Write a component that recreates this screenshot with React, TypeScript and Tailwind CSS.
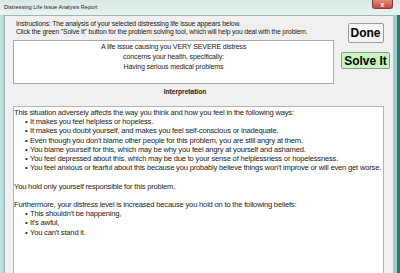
import React from "react";

const bullets1 = [
  "It makes you feel helpless or hopeless.",
  "It makes you doubt yourself, and makes you feel self-conscious or inadequate.",
  "Even though you don't blame other people for this problem, you are still angry at them.",
  "You blame yourself for this, which may be why you feel angry at yourself and ashamed.",
  "You feel depressed about this, which may be due to your sense of helplessness or hopelessness.",
  "You feel anxious or fearful about this because you probably believe things won't improve or will even get worse.",
];

const beliefs = ["This shouldn't be happening,", "It's awful,", "You can't stand it."];

const Bullet = ({ text }: { text: string }) => (
  <div className="flex pl-[11px]">
    <span className="w-[5px] shrink-0">•</span>
    <span>{text}</span>
  </div>
);

export default function App() {
  return (
    <div
      className="w-[400px] h-[273px] overflow-hidden flex flex-col bg-[#b9dcd6] text-[#1a1a1a]"
      style={{ fontFamily: '"Liberation Sans", Arial, sans-serif' }}
    >
      {/* title bar */}
      <div className="h-[15px] shrink-0 flex items-start justify-between bg-gradient-to-b from-[#d6e9e6] to-[#e9f3f1]">
        <span className="pl-[4px] pt-[3px] text-[5.6px] leading-[9px] text-[#222]">
          Distressing Life Issue Analysis Report
        </span>
        <div className="mr-[7px] w-[21px] h-[9px] rounded-b-[3px] bg-gradient-to-b from-[#e28a7d] to-[#c44a3a] border border-t-0 border-[#8c3b30] flex items-center justify-center text-white text-[7px] leading-[7px] font-bold">
          x
        </div>
      </div>

      <div className="flex flex-1 min-h-0">
        <div className="w-[4px] shrink-0 bg-gradient-to-r from-[#c6e6e0] to-[#a9d6ce]" />

        {/* client */}
        <div className="flex-1 min-h-0 bg-[#f0f0f0] border-l border-t border-[#9fb5b2] flex flex-col">
          <div className="flex">
            <div className="flex flex-col ml-[8px] w-[321px]">
              <div className="pt-[4px] pl-[3px] text-[6.8px] leading-[8px] tracking-[-0.15px] text-[#222]">
                <div>Instructions: The analysis of your selected distressing life issue appears below.</div>
                <div>
                  Click the green "Solve It" button for the problem solving tool, which will help you deal with the
                  problem.
                </div>
              </div>
              <div className="mt-[4px] h-[44px] bg-white border border-[#a8a8a8] flex flex-col items-center pt-[1px] text-[7.1px] leading-[10px] tracking-[-0.15px] text-[#222]">
                <div>A life issue causing you VERY SEVERE distress</div>
                <div>concerns your health, specifically:</div>
                <div>Having serious medical problems</div>
              </div>
            </div>
            <div className="flex-1 flex flex-col items-center pt-[7px] pl-[4px]">
              <button className="w-[36px] h-[20px] bg-[#f4f4f4] border border-[#9a9a9a] rounded-[2px] text-[12px] leading-[12px] font-bold text-black">
                Done
              </button>
              <button className="mt-[9px] w-[49px] h-[17px] bg-[#c6f5bf] border border-[#8a9a88] rounded-[2px] text-[12px] leading-[12px] font-bold text-black">
                Solve It
              </button>
            </div>
          </div>

          <div className="ml-[8px] w-[344px] mt-[3px] text-center text-[6.6px] leading-[10px] font-bold text-[#222]">
            Interpretation
          </div>

          <div className="ml-[8px] mr-[9px] mt-[9px] flex-1 bg-white border border-b-0 border-[#b4b4b4] pt-[1px] text-[7.6px] leading-[9.2px] tracking-[-0.2px] text-[#222]">
            <div>This situation adversely affects the way you think and how you feel in the following ways:</div>
            {bullets1.map((b) => (
              <Bullet key={b} text={b} />
            ))}
            <div className="h-[9.2px]" />
            <div>You hold only yourself responsible for this problem.</div>
            <div className="h-[9.2px]" />
            <div>Furthermore, your distress level is increased because you hold on to the following beliefs:</div>
            {beliefs.map((b) => (
              <Bullet key={b} text={b} />
            ))}
          </div>
        </div>

        <div className="w-[7px] shrink-0 flex">
          <div className="w-[4px] bg-[#93d3cc]" />
          <div className="w-[3px] bg-[#3f6f68]" />
        </div>
      </div>
    </div>
  );
}
